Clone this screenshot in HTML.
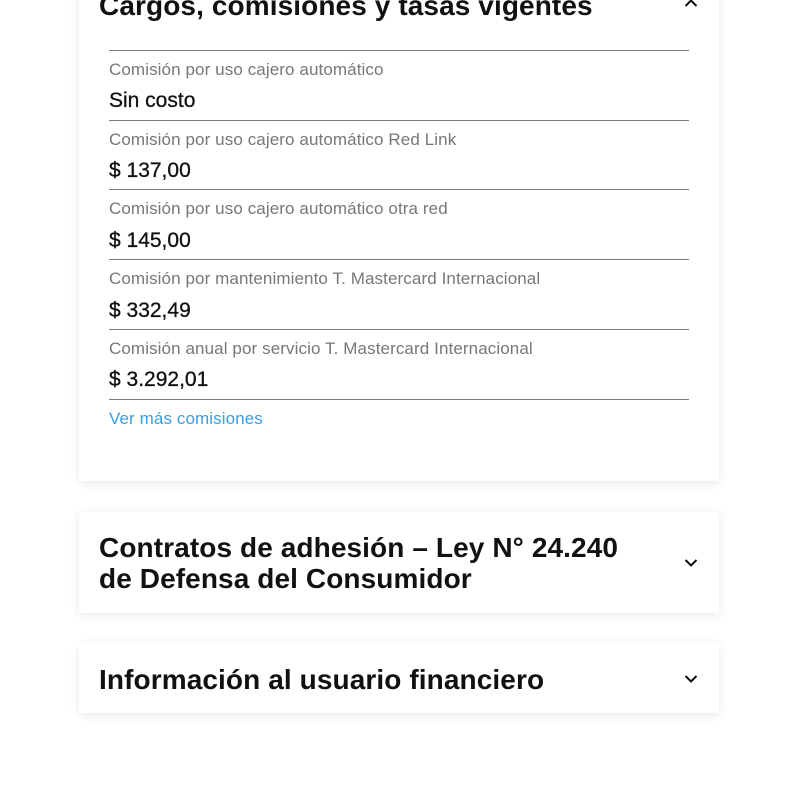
<!DOCTYPE html>
<html><head><meta charset="utf-8"><style>
body{margin:0;background:#fff;width:785px;height:800px;position:relative;overflow:hidden;font-family:"Liberation Sans",sans-serif}
.card{position:absolute;left:79px;width:640px;background:#fff;box-shadow:0 2px 10px rgba(0,0,0,.09)}
.h{position:absolute;left:20px;font-size:28px;font-weight:bold;color:#111;line-height:31px;letter-spacing:.1px}
.line{position:absolute;left:30px;width:580px;height:1px;background:#7a7a7a}
.lab{position:absolute;left:30px;font-size:17px;color:#777;line-height:20px;letter-spacing:.1px}
.val{position:absolute;left:30px;font-size:21px;color:#111;line-height:24px;-webkit-text-stroke:.3px #111}
svg{position:absolute}
</style></head><body>
<div class="card" style="top:-20px;height:501px">
<div class="h" style="top:10px">Cargos, comisiones y tasas vigentes</div>
<svg style="left:605px;top:18px" width="14" height="10" viewBox="0 0 14 10"><path d="M1.5 8 L7 2.5 L12.5 8" fill="none" stroke="#111" stroke-width="2"/></svg>
<div class="line" style="top:70px"></div>
<div class="lab" style="top:80px">Comisión por uso cajero automático</div>
<div class="val" style="top:109px">Sin costo</div>
<div class="line" style="top:140px"></div>
<div class="lab" style="top:150px">Comisión por uso cajero automático Red Link</div>
<div class="val" style="top:179px">$ 137,00</div>
<div class="line" style="top:209px"></div>
<div class="lab" style="top:219px">Comisión por uso cajero automático otra red</div>
<div class="val" style="top:249px">$ 145,00</div>
<div class="line" style="top:279px"></div>
<div class="lab" style="top:289px">Comisión por mantenimiento T. Mastercard Internacional</div>
<div class="val" style="top:319px">$ 332,49</div>
<div class="line" style="top:349px"></div>
<div class="lab" style="top:359px">Comisión anual por servicio T. Mastercard Internacional</div>
<div class="val" style="top:388px">$ 3.292,01</div>
<div class="line" style="top:419px"></div>
<div class="lab" style="top:429px;color:#3b9ee0">Ver más comisiones</div>
</div>
<div class="card" style="top:511px;height:102px">
<div class="h" style="top:21px">Contratos de adhesión – Ley N° 24.240<br>de Defensa del Consumidor</div>
<svg style="left:605px;top:47px" width="14" height="10" viewBox="0 0 14 10"><path d="M1.5 2 L7 7.5 L12.5 2" fill="none" stroke="#111" stroke-width="2"/></svg>
</div>
<div class="card" style="top:643px;height:70px">
<div class="h" style="top:21px">Información al usuario financiero</div>
<svg style="left:605px;top:31px" width="14" height="10" viewBox="0 0 14 10"><path d="M1.5 2 L7 7.5 L12.5 2" fill="none" stroke="#111" stroke-width="2"/></svg>
</div>
</body></html>
